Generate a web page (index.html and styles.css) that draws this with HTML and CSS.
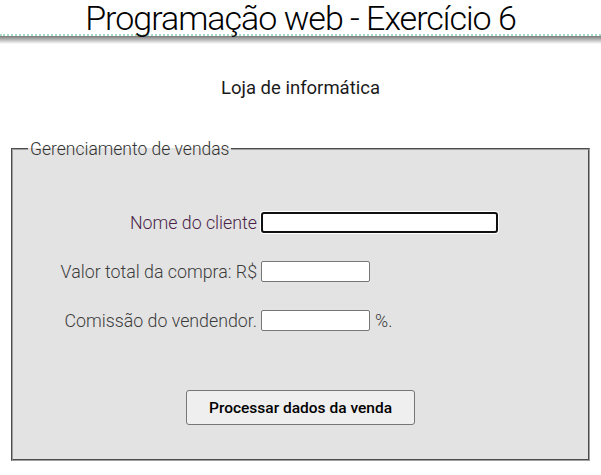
FILE: index.html
```html
<!DOCTYPE html>
<html lang="pt-BR">
<head>
<meta charset="utf-8">
<title>Programação web - Exercício 6</title>
<link rel="stylesheet" href="styles.css">
</head>
<body>
<header class="top">
  <h1 class="title">Programação web - Exercício 6</h1>
</header>
<div class="shade"></div>
<p class="subtitle">Loja de informática</p>
<form class="form">
  <fieldset class="box">
    <legend class="legend">Gerenciamento de vendas</legend>
    <div class="row">
      <label class="label label-active" for="nome">Nome do cliente</label>
      <input class="field field-wide field-focus" id="nome" type="text" autofocus>
    </div>
    <div class="row">
      <label class="label" for="valor">Valor total da compra: R$</label>
      <input class="field" id="valor" type="text">
    </div>
    <div class="row">
      <label class="label" for="comissao">Comissão do vendendor.</label>
      <input class="field" id="comissao" type="text">
      <span class="unit">%.</span>
    </div>
    <div class="actions">
      <button class="btn" type="button">Processar dados da venda</button>
    </div>
  </fieldset>
</form>
</body>
</html>
```
FILE: styles.css
```css
html, body {
  margin: 0;
  padding: 0;
  background: #fff;
  font-family: Roboto, "Liberation Sans", sans-serif;
}
.top {
  height: 34px;
  border-bottom: 2px dotted #a9dcc6;
  text-align: center;
}
.title {
  margin: 0;
  font-size: 34px;
  font-weight: 300;
  letter-spacing: -1px;
  line-height: 34px;
  padding-top: 1px;
  color: #000;
  white-space: nowrap;
}
.shade {
  height: 8px;
  background: linear-gradient(#7a7a7a, #fff);
}
.subtitle {
  margin: 33px 0 0;
  text-align: center;
  font-size: 18.5px;
  line-height: 22px;
  color: #1a1a1a;
}
.form {
  margin: 40px 11px 0;
}
.box {
  margin: 0;
  padding: 53px 12px 34px;
  border: 2px groove #a0a0a0;
  background: #e3e3e3;
}
.legend {
  padding: 0 2px;
  margin-left: 3px;
  font-size: 17.5px;
  font-weight: 300;
  color: #333;
}
.row {
  display: flex;
  align-items: center;
  height: 21px;
  margin-bottom: 28px;
}
.label {
  width: 232px;
  flex: none;
  text-align: right;
  font-size: 17.8px;
  font-weight: 300;
  color: #3c3c3c;
  margin-right: 4px;
}
.label-active {
  color: #4a1f48;
}
.field {
  box-sizing: border-box;
  width: 109px;
  height: 21px;
  border: 1px solid #767676;
  border-radius: 2px;
  padding: 1px 2px;
  background: #fff;
  font-size: 13px;
}
.field-wide {
  width: 237px;
}
.field-focus {
  border: 2px solid #101010;
  border-radius: 3px;
  outline: none;
  box-shadow: 0 0 0 1px #fff;
}
.unit {
  margin-left: 5px;
  font-size: 17.8px;
  font-weight: 300;
  color: #3c3c3c;
}
.actions {
  display: flex;
  justify-content: center;
  margin-top: 59px;
}
.btn {
  width: 229px;
  height: 35px;
  border: 1px solid #767676;
  border-radius: 3px;
  background: #efefef;
  font-family: Roboto, sans-serif;
  font-weight: 500;
  font-size: 15.5px;
  color: #000;
}
```
